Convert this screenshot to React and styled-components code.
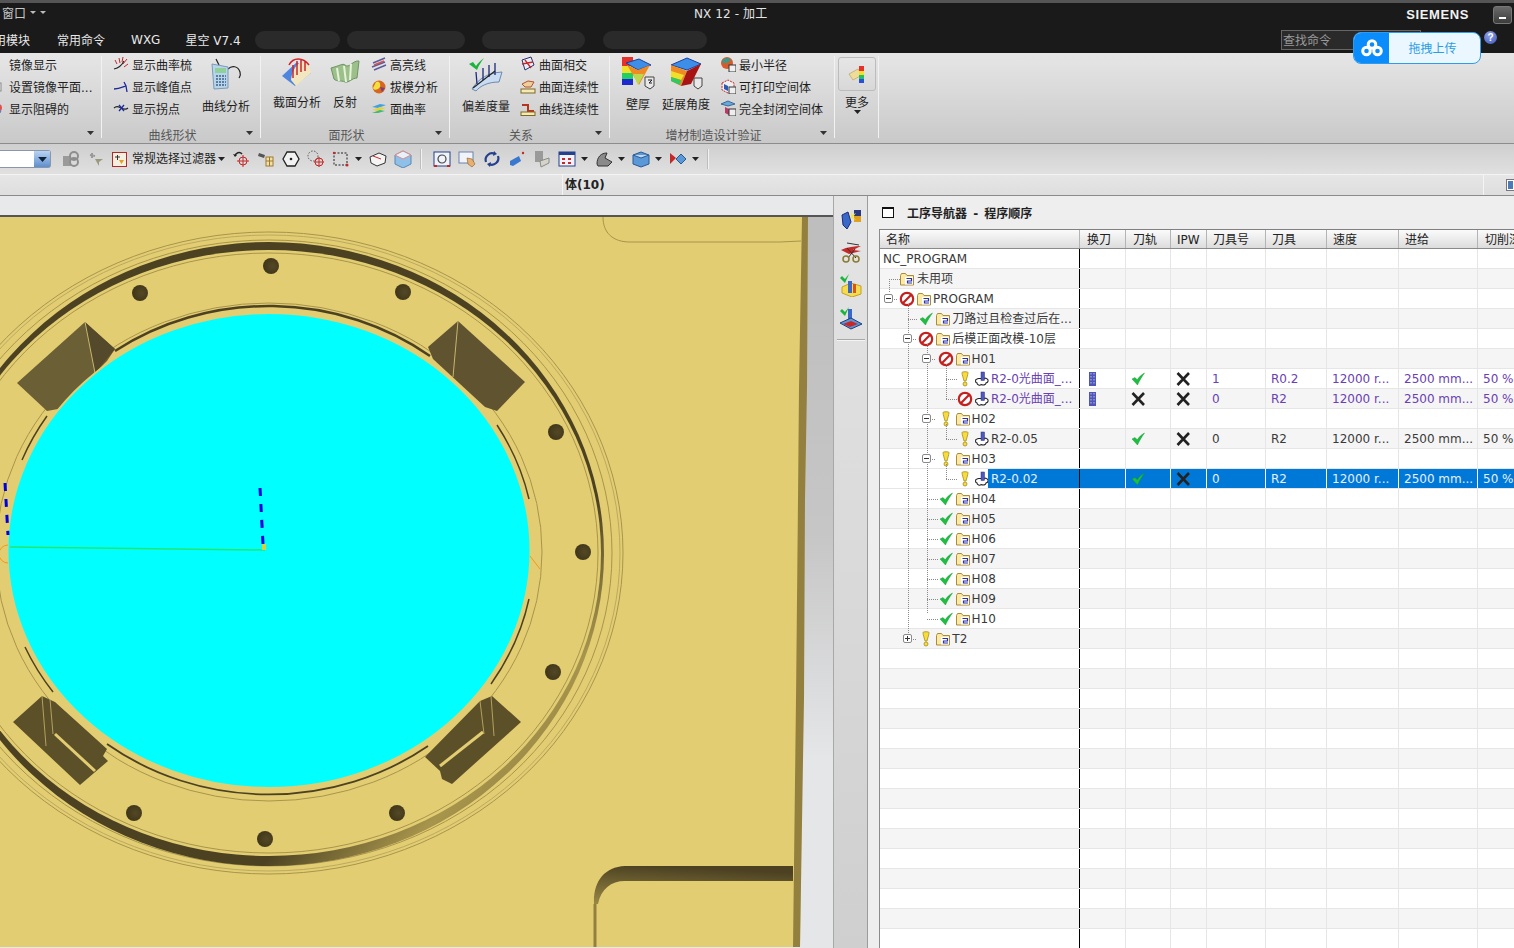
import React from 'react';
import styled, { createGlobalStyle } from 'styled-components';

const GlobalStyle = createGlobalStyle`
	html, body {
		margin: 0;
		padding: 0;
		width: 1514px;
		height: 948px;
		overflow: hidden;
		background: #e4e4e4;
		font-family: "DejaVu Sans", "Noto Sans CJK SC", sans-serif;
		font-size: 12px;
	}
`;

const Page = styled.div`
	position: relative;
	width: 1514px;
	height: 948px;
	overflow: hidden;
	display: flex;
	flex-direction: column;
`;

/* ---------- title + tabs ---------- */
const TitleBar = styled.div`
	height: 23px;
	border-top: 3px solid #555;
	background: #1a1a1a;
	color: #ddd;
	display: flex;
	align-items: center;
	flex: none;
`;

const WindowMenu = styled.div`
	width: 694px;
	padding: 0 0 5px 2px;
	box-sizing: border-box;
	display: flex;
	align-items: center;
	gap: 4px;
	color: #c8c8c8;
	font-family: "Noto Sans CJK SC", sans-serif;
`;

const TinyArrow = styled.span`
	display: inline-block;
	width: 0;
	height: 0;
	border-left: 3px solid transparent;
	border-right: 3px solid transparent;
	border-top: 3px solid ${({ $color }) => $color || '#bbb'};
`;

const AppName = styled.div`
	color: #e4e4e4;
	font-size: 12px;
	letter-spacing: 0.1px;
	padding-bottom: 5px;
`;

const Brand = styled.div`
	margin-left: auto;
	margin-right: 24px;
	font-family: "Liberation Sans", sans-serif;
	font-weight: 700;
	font-size: 13px;
	letter-spacing: 0.6px;
	color: #f2f2f2;
`;

const MinButton = styled.div`
	width: 19px;
	height: 18px;
	margin-right: 2px;
	box-sizing: border-box;
	border: 1px solid #777;
	border-radius: 3px;
	background: linear-gradient(#6a6a6a, #3c3c3c);
	display: flex;
	align-items: flex-end;
	justify-content: center;
	padding-bottom: 4px;
	&::before {
		content: '';
		width: 7px;
		height: 2px;
		background: #fff;
	}
`;

const TabBar = styled.div`
	height: 27px;
	background: #1a1a1a;
	color: #e8e8e8;
	display: flex;
	align-items: center;
	flex: none;
`;

const Tab = styled.div`
	margin-left: ${({ $left }) => $left}px;
	white-space: nowrap;
	font-size: 12px;
`;

const Smudge = styled.div`
	width: ${({ $w }) => $w}px;
	height: 18px;
	margin-left: ${({ $left }) => $left}px;
	border-radius: 10px;
	background: #2a2a2a;
	box-shadow: 0 1px 0 -${({ $w }) => Math.round($w * 0.3)}px #8a8a8a;
`;

const SearchBox = styled.div`
	width: 140px;
	height: 20px;
	margin-left: auto;
	box-sizing: border-box;
	border: 1px solid #666;
	background: #2a2a2a;
	color: #9a9a9a;
	padding: 2px 1px 0;
	line-height: 16px;
`;

const HelpDot = styled.div`
	width: 13px;
	height: 13px;
	margin: -4px 17px 0 63px;
	border-radius: 50%;
	background: radial-gradient(circle at 40% 30%, #8ea2ea, #3f55b8);
	color: #fff;
	font: 700 10px/13px "Liberation Sans", sans-serif;
	text-align: center;
`;

const UploadWidget = styled.div`
	position: absolute;
	left: 1353px;
	top: 32px;
	width: 128px;
	height: 32px;
	box-sizing: border-box;
	border: 1px solid #2f9bee;
	border-radius: 8px;
	overflow: hidden;
	background: #eaf7ff;
	display: flex;
	align-items: center;
`;

const UploadLogo = styled.div`
	width: 35px;
	height: 100%;
	background: #0a8cfb;
	display: flex;
	align-items: center;
	justify-content: center;
	flex: none;
`;

const UploadText = styled.div`
	flex: 1;
	text-align: center;
	color: #2b9ce6;
	font-size: 12px;
	padding: 0 4px 2px 0;
`;

/* ---------- ribbon ---------- */
const Ribbon = styled.div`
	height: 91px;
	flex: none;
	display: flex;
	background: linear-gradient(#e6e6e6, #c9c9c9);
	border-bottom: 1px solid #8c8c8c;
	box-sizing: border-box;
	color: #1e1e1e;
`;

const Group = styled.div`
	width: ${({ $w }) => $w}px;
	flex: none;
	box-sizing: border-box;
	display: flex;
	flex-direction: column;
	position: relative;
	&::after {
		content: '';
		position: absolute;
		right: 0;
		top: 3px;
		bottom: 5px;
		width: 1px;
		background: #f2f2f2;
	}
`;

const GroupBody = styled.div`
	height: 69px;
	flex: none;
	display: flex;
	align-items: flex-start;
	margin-left: ${({ $pad }) => $pad}px;
	gap: ${({ $gap }) => $gap || 0}px;
`;

const GroupCaption = styled.div`
	flex: 1;
	display: flex;
	align-items: center;
	padding-right: 8px;
	color: #555;
	font-size: 12px;
`;

const CaptionText = styled.div`
	flex: 1;
	text-align: center;
	padding-right: 3px;
	margin-top: 4px;
`;

const BigTool = styled.div`
	width: ${({ $w }) => $w}px;
	flex: none;
	margin-left: ${({ $left }) => $left || 0}px;
	display: flex;
	flex-direction: column;
	align-items: center;
	white-space: nowrap;
	svg {
		flex: none;
		margin-top: 3px;
		margin-bottom: 5px;
	}
`;

const SmallList = styled.div`
	display: flex;
	flex-direction: column;
	margin-left: ${({ $left }) => $left || 0}px;
`;

const SmallTool = styled.div`
	height: 22px;
	display: flex;
	align-items: center;
	gap: 3px;
	white-space: nowrap;
	svg {
		flex: none;
	}
`;

const MoreGroup = styled(Group)`
	align-items: center;
	padding-top: 4px;
`;

const MoreButton = styled.div`
	width: 38px;
	height: 34px;
	box-sizing: border-box;
	border: 1px solid #bcbcbc;
	border-radius: 3px;
	background: linear-gradient(#e6e6e6, #d8d8d8);
	display: flex;
	align-items: center;
	justify-content: center;
`;

const MoreLabel = styled.div`
	margin-top: 5px;
	line-height: 14px;
`;

/* ---------- toolbar ---------- */
const ToolBar = styled.div`
	height: 31px;
	flex: none;
	display: flex;
	align-items: center;
	box-sizing: border-box;
	background: linear-gradient(#cfcfcf, #e0e0e0);
	border-bottom: 1px solid #f4f4f4;
	color: #1e1e1e;
`;

const Combo = styled.div`
	width: 51px;
	height: 18px;
	flex: none;
	box-sizing: border-box;
	border: 1px solid #8a97a8;
	border-left: none;
	border-radius: 0 3px 3px 0;
	background: #fff;
	display: flex;
	justify-content: flex-end;
	margin-right: 7px;
`;

const ComboDrop = styled.div`
	width: 16px;
	background: linear-gradient(#b9d3f2, #5f8fce);
	display: flex;
	align-items: center;
	justify-content: center;
`;

const ToolSlot = styled.div`
	width: 25px;
	height: 20px;
	flex: none;
	display: flex;
	align-items: center;
	justify-content: center;
`;

const ToolDrop = styled.div`
	width: 10px;
	margin-right: 2px;
	flex: none;
	display: flex;
	justify-content: center;
`;

const FilterLabel = styled.div`
	margin: -3px 2px 0 5px;
	width: 82px;
	white-space: nowrap;
	flex: none;
`;

const FilterBox = styled.div`
	margin-left: 4px;
	width: 15px;
	height: 15px;
	flex: none;
	box-sizing: border-box;
	border: 1px solid #b02a2a;
	background: #f5efe0;
	display: flex;
	align-items: center;
	justify-content: center;
`;

const ToolSep = styled.div`
	width: 1px;
	height: 20px;
	margin: 0 ${({ $right }) => $right}px 0 6px;
	flex: none;
	background: #f2f2f2;
	box-shadow: -1px 0 0 #bdbdbd;
`;

/* ---------- selection bar ---------- */
const SelectionBar = styled.div`
	height: 21px;
	flex: none;
	box-sizing: border-box;
	display: flex;
	align-items: center;
	background: linear-gradient(#e6e6e6, #dedede);
	border-bottom: 1px solid #8a8a8a;
`;

const SelectionTitle = styled.div`
	margin-left: 562px;
	height: 100%;
	padding-left: 2px;
	border-left: 1px solid #f4f4f4;
	font-weight: 700;
	font-size: 12px;
	line-height: 20px;
	color: #222;
`;

const SelectionEnd = styled.div`
	margin-left: auto;
	width: 31px;
	height: 100%;
	box-sizing: border-box;
	border-left: 1px solid #f4f4f4;
	display: flex;
	align-items: center;
	justify-content: flex-end;
`;

const ViewIcon = styled.div`
	width: 8px;
	height: 12px;
	box-sizing: border-box;
	border: 1px solid #777;
	border-right: none;
	background: #4a7ab8;
	box-shadow: inset 0 0 0 1px #fff;
`;

/* ---------- main area ---------- */
const Main = styled.div`
	flex: 1;
	min-height: 0;
	display: flex;
`;

const Viewport = styled.div`
	width: 834px;
	flex: none;
	display: flex;
	flex-direction: column;
	background: linear-gradient(#bdbdbd, #c6c6c6 45%, #e5e6e8 75%);
	border-right: 1px solid #a8a8a8;
	box-sizing: border-box;
`;

const ViewportStrip = styled.div`
	height: 19px;
	flex: none;
	background: #e8e9eb;
	border-bottom: 2px solid #555;
`;

const SideRail = styled.div`
	width: 34px;
	flex: none;
	box-sizing: border-box;
	background: linear-gradient(#e4e4e4, #cfcfcf);
	border-right: 1px solid #9c9c9c;
	display: flex;
	flex-direction: column;
	align-items: center;
	padding-top: 7px;
	gap: 1px;
`;

const RailButton = styled.div`
	width: 30px;
	height: 32px;
	display: flex;
	align-items: center;
	justify-content: center;
`;

const RailLine = styled.div`
	width: 28px;
	height: 1px;
	margin-top: 4px;
	background: #a8a8a8;
	box-shadow: 0 1px 0 #f4f4f4;
`;

const NavPanel = styled.div`
	flex: 1;
	min-width: 0;
	background: #eeeeee;
	display: flex;
	flex-direction: column;
	padding-left: 11px;
`;

const NavHeader = styled.div`
	height: 33px;
	flex: none;
	display: flex;
	align-items: center;
	gap: 13px;
	padding-left: 3px;
	font-weight: 700;
	font-size: 12px;
	word-spacing: 2px;
	color: #222;
`;

const NavCheck = styled.div`
	width: 12px;
	height: 11px;
	box-sizing: border-box;
	border: 1px solid #111;
	border-top-width: 2px;
	background: #fff;
`;

const Table = styled.div`
	flex: 1;
	overflow: hidden;
	background: #fff;
	border-left: 1px solid #8a8a8a;
	border-top: 1px solid #808080;
	display: flex;
	flex-direction: column;
	color: #3a3a3a;
`;

const columns = '200px 46px 45px 36px 59px 61px 72px 79px 37px';

const HeadRow = styled.div`
	display: grid;
	grid-template-columns: ${columns};
	height: 19px;
	flex: none;
	box-sizing: border-box;
	border-bottom: 1px solid #8a8a8a;
	background: linear-gradient(#fbfbfb, #dcdcdc);
`;

const HeadCell = styled.div`
	padding-left: ${({ $pad }) => $pad || 6}px;
	border-right: 1px solid #b4b4b4;
	white-space: nowrap;
	overflow: hidden;
	line-height: 21px;
	color: #222;
`;

const TableBody = styled.div`
	position: relative;
	flex: 1;
	overflow: hidden;
`;

const TreeGuides = styled.svg`
	position: absolute;
	left: 0;
	top: 0;
	pointer-events: none;
`;

const Row = styled.div`
	display: grid;
	grid-template-columns: ${columns};
	height: 20px;
	box-sizing: border-box;
	border-bottom: 1px solid #e6e6e6;
	background: ${({ $odd, $selected }) => ($selected ? '#fff' : $odd ? '#f5f5f5' : '#fff')};
	color: ${({ $purple, $selected }) => ($selected ? '#e6f0ff' : $purple ? '#6a40b4' : '#3a3a3a')};
`;

const NameCell = styled.div`
	display: flex;
	align-items: center;
	border-right: 1px solid #000;
	white-space: nowrap;
	overflow: hidden;
`;

const ExpandSlot = styled.div`
	width: 20px;
	margin-left: ${({ $level }) => $level * 19.3 - 2}px;
	flex: none;
	display: flex;
	justify-content: center;
`;

const Expander = styled.div`
	position: relative;
	z-index: 2;
	width: 9px;
	height: 9px;
	box-sizing: border-box;
	border: 1px solid #8a8a8a;
	border-radius: 2px;
	background: #fff;
	&::before {
		content: '';
		position: absolute;
		left: 1px;
		top: 3px;
		width: 5px;
		height: 1px;
		background: #333;
	}
	&::after {
		content: '';
		display: ${({ $closed }) => ($closed ? 'block' : 'none')};
		position: absolute;
		left: 3px;
		top: 1px;
		width: 1px;
		height: 5px;
		background: #333;
	}
`;

const StatusSlot = styled.div`
	width: 18px;
	flex: none;
	display: flex;
	justify-content: center;
`;

const KindSlot = styled.div`
	width: 16px;
	flex: none;
	display: flex;
	justify-content: center;
`;

const NameText = styled.div`
	flex: 1;
	align-self: stretch;
	margin-left: ${({ $selected }) => ($selected ? -2 : 1)}px;
	padding-left: ${({ $selected }) => ($selected ? 3 : 0)}px;
	line-height: 20px;
	background: ${({ $selected }) => ($selected ? '#0078d7' : 'transparent')};
`;

const RootText = styled.div`
	padding-left: 3px;
`;

const Cell = styled.div`
	display: flex;
	align-items: center;
	padding-left: ${({ $pad }) => $pad || 5}px;
	border-right: 1px solid ${({ $selected }) => ($selected ? '#fff' : '#e6e6e6')};
	background: ${({ $selected }) => ($selected ? '#0078d7' : 'transparent')};
	white-space: nowrap;
	overflow: hidden;
`;

/* ---------- icons ---------- */
const Svg = ({ s = 16, w, h, vb, children }) => (
	<svg width={w || s} height={h || s} viewBox={vb || `0 0 ${w || s} ${h || s}`}>{children}</svg>
);

const Tri = ({ c = '#222', s = 3 }) => (
	<svg width={s * 2 + 1} height={s + 1} viewBox="0 0 7 4" style={{ display: 'block' }}>
		<path d="M0 0h7L3.5 4z" fill={c} />
	</svg>
);

const FolderIcon = () => (
	<Svg s={16}>
		<path d="M1.5 4.5V14h13V4.5H8L6.5 2.5h-4z" fill="#fbe9a4" stroke="#a98c3a" />
		<rect x="6" y="6" width="8" height="7.5" fill="#fff" />
		<path d="M7.5 7.5h5v2.5h-4v2h4.5" fill="none" stroke="#2a2fa8" strokeWidth="1.2" />
	</Svg>
);

const NoEntryIcon = () => (
	<Svg s={16}>
		<circle cx="8" cy="8" r="6.2" fill="#fff" stroke="#c4201f" strokeWidth="2.2" />
		<path d="M3.8 12.2l8.4-8.4" stroke="#c4201f" strokeWidth="2.2" />
	</Svg>
);

const CheckIcon = ({ s = 14 }) => (
	<svg width={s} height={s} viewBox="0 0 14 14">
		<path d="M1 7l3-1.500 2.300 2.300C8 5 10 3 13.500 1 11 4.500 8.500 8.500 6.500 13z" fill="#1cc040" stroke="#0f8e2a" strokeWidth=".4" />
	</svg>
);

const BulbIcon = () => (
	<Svg s={16}>
		<path d="M5 1.500c0-1 6-1 6 0 0 2.500-1.500 6-2 8.500H7C6.500 7.500 5 4 5 1.500z" fill="#f7dc3c" stroke="#a48c1e" strokeWidth=".8" />
		<ellipse cx="8" cy="13" rx="2" ry="2" fill="#f7dc3c" stroke="#a48c1e" strokeWidth=".8" />
	</Svg>
);

const OpIcon = () => (
	<Svg s={16}>
		<path d="M3 8c-2 .5-2 3.500 0 4 0 2 3 3 4 1.500 2 1 5 .5 5-1.500 2.500-.5 3-3.500.5-4.500-1-.5-2-.5-3 0H4.500z" fill="#fff" stroke="#222" strokeWidth="1.100" />
		<rect x="7" y="1" width="3.500" height="8.500" fill="#4f58b8" stroke="#2e3384" strokeWidth=".5" />
	</Svg>
);

const CrossIcon = () => (
	<svg width="14" height="14" viewBox="0 0 14 14">
		<path d="M1.500 1l11.500 12M13 1L1.500 13" stroke="#222" strokeWidth="2.600" />
	</svg>
);

const ToolChangeIcon = () => (
	<svg width="7" height="14" viewBox="0 0 7 14">
		<rect width="7" height="14" fill="#4f56b6" />
		<path d="M2 1v12M5 1v12" stroke="#b8bcf0" strokeDasharray="1.500 1.500" />
	</svg>
);

const ic = {
	mirror: <Svg s={16}><path d="M8 2v12" stroke="#b52020" strokeWidth="2" /><rect x="2" y="6" width="5" height="7" fill="#f3d6c0" stroke="#b52020" /></Svg>,
	mirrorPlane: <Svg s={16}><rect x="3" y="5" width="8" height="8" fill="#eee" stroke="#888" /><path d="M8 2v4" stroke="#b52020" strokeWidth="2" /></Svg>,
	block: <Svg s={16}><circle cx="8" cy="8" r="4" fill="#e05050" /><path d="M3 9l8 3" stroke="#4a8ad0" strokeWidth="2" /></Svg>,
	comb: <Svg s={16}><path d="M1 13c5-1 8-4 10-8" fill="none" stroke="#222" strokeWidth="1.200" /><path d="M4 8L2 4M7 7L6 2M9 6l1-5M10 8l4-5M11 11l4-3" stroke="#c22a2a" /></Svg>,
	peak: <Svg s={16}><path d="M1 11c5 0 9-2 12-3" fill="none" stroke="#1c2a9c" strokeWidth="1.300" /><path d="M11 4l2 4 1 6" fill="none" stroke="#1c2a9c" strokeWidth="1.300" /></Svg>,
	inflect: <Svg s={16}><path d="M1 8c3-3 5-1 7 0s5 2 7 0" fill="none" stroke="#222" strokeWidth="1.100" /><path d="M6 5l5 6M11 5l-5 6" stroke="#1c2a9c" strokeWidth="1.300" /></Svg>,
	curveAn: (
		<Svg w={36} h={36}>
			<path d="M8 3l3 6M20 13c4-4 10-3 12 3 1 3 0 4-1 6" fill="none" stroke="#222" strokeWidth="1.200" />
			<path d="M4 8l16 3v21L6 33z" fill="#b7d4ea" stroke="#7b9ab8" />
			<rect x="7" y="12" width="11" height="5" fill="#8fd09a" />
			<path d="M8 20h10M8 23h10M8 26h10M8 29h10" stroke="#5b7ea0" strokeWidth="2" strokeDasharray="2 1" />
		</Svg>
	),
	section: (
		<Svg w={32} h={32}>
			<path d="M1 20L16 6l14 11-16 13z" fill="#4f84e0" />
			<path d="M10 24c1-12 9-20 14-18 4 2 5 6 6 11l-15 13z" fill="#f2e6c0" />
			<path d="M12 22V9M16 19V5M20 16V3M24 15V5M8 9c4-8 14-8 20 0" fill="none" stroke="#d0242a" strokeWidth="1.500" />
		</Svg>
	),
	reflect: (
		<Svg w={32} h={32}>
			<path d="M2 12c8-2 12-5 14-3 4 4 8-5 14-4l-2 17c-5 0-8 5-12 4-4-2-8 0-11-3z" fill="#9cc08a" stroke="#6e9462" />
			<path d="M8 12l2 13M15 10l2 16M22 8l-1 16" stroke="#e6f2da" strokeWidth="2" />
		</Svg>
	),
	highlight: <Svg s={16}><path d="M2 7l12-5M1 11l13-5M3 14l12-5" stroke="#5a5a9c" strokeWidth="1.500" /><path d="M3 9l10-4" stroke="#d2524e" strokeWidth="1.500" /></Svg>,
	draft: <Svg s={16}><circle cx="8" cy="9" r="6.500" fill="#d8661e" /><path d="M5 4c3-2 5 2 4 5-2 3-6 4-7 1z" fill="#f2de3c" /><path d="M9 9l5 1-3 4z" fill="#7a3c80" /></Svg>,
	faceCurv: <Svg s={16}><path d="M1 7l8-3 6 1-8 3z" fill="#3ea0e6" /><path d="M1 10l8-3 6 1-8 3z" fill="#e4d23a" /><path d="M1 13l8-3 5 1-7 2z" fill="#40b878" /></Svg>,
	deviation: (
		<Svg w={36} h={36}>
			<path d="M4 33c7-11 16-16 30-17l-3 10C20 26 12 30 8 35z" fill="#c9dcf2" stroke="#6b8ab0" />
			<path d="M9 28L8 16M15 24V12M21 21V9M27 19V7" stroke="#1c2a7c" strokeWidth="1.300" />
			<path d="M5 32L27 15" stroke="#222" strokeWidth="1.200" />
			<path d="M1 8l4-2 3 4c2-3 5-6 8-8-3 4-5 7-7 12z" fill="#19b53c" />
		</Svg>
	),
	intersect: <Svg s={16}><path d="M2 4l9-3 3 8-9 5z" fill="#e8eef8" stroke="#26306c" /><path d="M5 4l6 8M2 8l11-2" stroke="#c62828" strokeWidth="1.300" /></Svg>,
	faceCont: <Svg s={16}><path d="M2 6l6-3 6 1-3 5H5z" fill="#eecf9c" stroke="#b4542a" /><rect x="1" y="11" width="14" height="4" fill="#f6e9b2" stroke="#7a6a2a" /></Svg>,
	curveCont: <Svg s={16}><path d="M2 5h6v6h6" fill="none" stroke="#b8321e" strokeWidth="2" /><rect x="1" y="12" width="14" height="3.500" fill="#f6e9b2" stroke="#7a6a2a" /></Svg>,
	wall: (
		<Svg w={34} h={34}>
			<rect x="1" y="1" width="11" height="28" fill="#1c2ad0" />
			<rect x="1" y="1" width="11" height="9" fill="#e8302a" />
			<rect x="1" y="10" width="11" height="7" fill="#f0e02c" />
			<rect x="1" y="17" width="11" height="6" fill="#20d060" />
			<path d="M5 7l13-4 12 6-13 5z" fill="#3d8ee8" stroke="#1c3f9c" />
			<path d="M6 9l11 5 12-5-11 20z" fill="#f08a22" />
			<path d="M12 18l5 11 6-11z" fill="#bcd850" />
			<path d="M24 21h9v9l-4 3-5-3z" fill="#e8e8e8" stroke="#444" />
			<path d="M27 24h4l-3 3h3" fill="none" stroke="#222" />
		</Svg>
	),
	extend: (
		<Svg w={34} h={34}>
			<path d="M2 9l16-7 14 6-14 6z" fill="#3d8ee8" stroke="#1c3f9c" />
			<path d="M2 9l16 6-6 15-10-5z" fill="#f08a22" />
			<path d="M2 15l13 4-3 5-10-3z" fill="#f0e02c" />
			<path d="M2 21l10 3-1 5-9-4z" fill="#30c860" />
			<path d="M18 15l14-7-10 20-10 2z" fill="#a81414" />
			<path d="M25 22h8v8l-4 3-4-3z" fill="#e8e8e8" stroke="#444" />
		</Svg>
	),
	radius: <Svg s={16}><circle cx="7" cy="7" r="6" fill="#d85a2a" /><path d="M2 7a5 5 0 0 1 9-3L7 7z" fill="#3a9a8a" /><rect x="9" y="9" width="7" height="7" fill="#eee" stroke="#333" /></Svg>,
	printable: <Svg s={16}><path d="M2 5l6-3 6 3v7l-6 3-6-3z" fill="#f0f0f0" stroke="#c62828" strokeDasharray="2 1" /><path d="M4 6l4 2v5l-4-2z" fill="#2a5ab8" /><rect x="9" y="9" width="7" height="7" fill="#eee" stroke="#333" /></Svg>,
	sealed: <Svg s={16}><path d="M1 4l7-3 7 3-7 2z" fill="#68a8d8" stroke="#3a6a9c" /><path d="M5 7l4 2v6l-4-2z" fill="#b83a6a" /><rect x="9" y="9" width="7" height="7" fill="#eee" stroke="#333" /></Svg>,
	more: <Svg w={18} h={20}><path d="M1 10l9-5 4 6-9 5z" fill="#f0dc9a" stroke="#b09a4a" strokeWidth=".6" /><rect x="11" y="2" width="5" height="5" fill="#e8302a" /><rect x="11" y="7" width="5" height="4" fill="#f0e02c" /><rect x="11" y="11" width="5" height="4" fill="#20c060" /><rect x="11" y="15" width="5" height="4" fill="#2a50d8" /></Svg>,
};

const tb = {
	t1: <Svg s={18}><rect x="1" y="6" width="8" height="10" fill="#9a9a9a" /><circle cx="12" cy="6" r="4" fill="none" stroke="#8e8e8e" strokeWidth="2" /><circle cx="12" cy="12" r="4" fill="none" stroke="#8e8e8e" strokeWidth="2" /></Svg>,
	t2: <Svg s={16}><path d="M2 4l5 1M4 2v5" stroke="#9a9a9a" strokeWidth="2" /><path d="M7 8h8l-4 3v4z" fill="#9a9a7a" /></Svg>,
	snap: <Svg s={18}><path d="M3 6a4 4 0 0 1 7-2" fill="none" stroke="#222" strokeWidth="1.500" /><path d="M1 4l2 3 2-2" fill="#222" /><circle cx="11" cy="11" r="4" fill="none" stroke="#c62828" /><path d="M11 5v12M5 11h12" stroke="#c62828" /></Svg>,
	bino: <Svg s={18}><path d="M2 3l6 2-1 3-6-2z" fill="#555" /><rect x="9" y="7" width="7" height="9" fill="#f0e0a8" stroke="#a07a30" /><path d="M9 11h7M12.500 7v9" stroke="#a07a30" /></Svg>,
	hex: <Svg s={18}><path d="M5 2h8l4 7-4 7H5L1 9z" fill="#f2f2f2" stroke="#222" strokeWidth="1.300" /><circle cx="9" cy="9" r="1.300" fill="#222" /></Svg>,
	ring: <Svg s={18}><circle cx="6" cy="6" r="5" fill="none" stroke="#555" strokeDasharray="1.500 1.500" /><circle cx="12" cy="12" r="4" fill="none" stroke="#c62828" /><path d="M12 7v10M7 12h10" stroke="#c62828" /></Svg>,
	rect: <Svg s={18}><rect x="2" y="3" width="13" height="12" fill="none" stroke="#222" strokeDasharray="2 1.500" /><circle cx="15" cy="15" r="1.500" fill="#c62828" /><circle cx="2" cy="3" r="1.200" fill="#c62828" /></Svg>,
	cube1: <Svg s={18}><path d="M1 7l9-4 7 3-1 7-8 3-6-3z" fill="#f4f4f4" stroke="#333" /><path d="M4 6l8 3" stroke="#c62828" /></Svg>,
	cube2: <Svg s={18}><path d="M1 5l8-4 8 4v9l-8 4-8-4z" fill="#8ec0e8" stroke="#5a88b0" /><path d="M1 5l8 4 8-4-8-4z" fill="#e6f2fa" stroke="#e08a8a" /></Svg>,
	fit: <Svg s={18}><rect x="1" y="2" width="16" height="14" fill="#f0f4fa" stroke="#25408c" /><circle cx="9" cy="9" r="4" fill="none" stroke="#444" strokeWidth="1.200" /><path d="M1 16h3M14 16h3" stroke="#c62828" strokeWidth="2" /></Svg>,
	hand: <Svg s={18}><rect x="1" y="2" width="14" height="11" fill="#f0f4fa" stroke="#6a82b0" /><path d="M9 8l5 1 3 5-3 3-4-3z" fill="#e8b070" stroke="#8a5a20" strokeWidth=".6" /></Svg>,
	rotate: <Svg s={18}><path d="M3 12a6.500 6.500 0 0 1 9-8M15 6a6.500 6.500 0 0 1-9 8" fill="none" stroke="#25408c" strokeWidth="2.200" /><path d="M11 1l3 3-4 2zM7 17l-3-3 4-2z" fill="#25408c" /></Svg>,
	pen: <Svg s={18}><path d="M2 11l9-5 2 5-8 5-3-1z" fill="#3a78d0" /><circle cx="15" cy="3" r="1.200" fill="#c62828" /></Svg>,
	layers: <Svg s={18}><rect x="2" y="1" width="8" height="11" fill="#9a9a9a" /><path d="M7 11l9-3v5l-8 4z" fill="#d4d4c8" stroke="#8a8a8a" /></Svg>,
	grid: <Svg s={18}><rect x="1" y="2" width="16" height="14" fill="#f2f2fa" stroke="#25408c" /><rect x="1" y="2" width="16" height="3" fill="#25408c" /><path d="M4 8h3v2H4zM10 8h3v2h-3zM4 12h3v2H4zM10 12h3v2h-3z" fill="#c62828" /></Svg>,
	shade: <Svg s={18}><path d="M2 14c0-7 4-11 10-11l-2 5 7 4-4 4H3z" fill="#8a8a8a" stroke="#333" /></Svg>,
	solid: <Svg s={18}><path d="M1 5l8-3 8 3v9l-8 3-8-3z" fill="#5a98d8" stroke="#2a5a94" /><path d="M1 5l8 3 8-3" fill="#bcd8f2" stroke="#2a5a94" /></Svg>,
	view: <Svg s={18}><path d="M1 3l6 5-6 6z" fill="#c62828" /><path d="M7 9l5-5 5 5-5 5z" fill="#5a98d8" stroke="#2a5a94" /></Svg>,
};

const UploadLogoIcon = () => (
	<svg width="22" height="18" viewBox="0 0 22 18">
		<g fill="none" stroke="#fff" strokeWidth="3">
			<circle cx="11" cy="5.500" r="3.800" />
			<circle cx="5.500" cy="12" r="3.800" />
			<circle cx="16.500" cy="12" r="3.800" />
		</g>
	</svg>
);

/* ---------- viewport drawing, viewBox uses screen coordinates ---------- */
const holes = [[271, 267], [140, 294], [403, 293], [556, 433], [583, 553], [553, 673], [397, 814], [265, 840], [134, 814]];

const PartView = () => (
	<svg width="833" height="730" viewBox="0 218 833 730" style={{ display: 'block' }}>
		<defs>
			<radialGradient id="hole" cx="60%" cy="50%" r="60%">
				<stop offset="0" stopColor="#544825" />
				<stop offset="1" stopColor="#3f3619" />
			</radialGradient>
			<linearGradient id="corner" x1="0" y1="1" x2="0.25" y2="0">
				<stop offset="0" stopColor="#9a8845" />
				<stop offset="1" stopColor="#4c4222" />
			</linearGradient>
			<linearGradient id="band" x1=".3" y1=".2" x2="1" y2=".8">
				<stop offset="0" stopColor="#4c4222" />
				<stop offset=".72" stopColor="#4c4222" />
				<stop offset=".88" stopColor="#a8954c" />
				<stop offset="1" stopColor="#8d7d41" />
			</linearGradient>
		</defs>
		<path d="M0 218H808L805 500 800 948H0z" fill="#e3cd72" />
		<path d="M802 218h6l-1 170-2 112-1 200-4 248h-7l3-248 2-200 1-112z" fill="#93803f" />
		<path d="M603 218c0 16 10 25 27 25h150l21-1" fill="none" stroke="#a8954c" />
		<path d="M625 867h168v15H625c-14 0-24 8-27 23h-4c-1-22 10-37 31-38z" fill="url(#corner)" />
		<path d="M595 905v43" stroke="#93803f" strokeWidth="3" />

		<ellipse cx="269" cy="554" rx="354" ry="321" fill="none" stroke="#a8954c" />
		<ellipse cx="269" cy="554" rx="351" ry="318" fill="none" stroke="#bba961" />
		<ellipse cx="269" cy="554" rx="343" ry="313" fill="none" stroke="#a8954c" />
		<ellipse cx="269" cy="555" rx="335" ry="312" fill="url(#band)" />
		<ellipse cx="269" cy="554" rx="332" ry="303" fill="#e3cd72" />
		<ellipse cx="269" cy="554" rx="329" ry="300" fill="none" stroke="#a8954c" />
		<ellipse cx="269" cy="553" rx="273" ry="249" fill="none" stroke="#a8954c" />
		<g fill="none" stroke="#4c4222">
			<path d="M115 352A266 244 0 0 1 430 357" strokeWidth="2.500" />
			<path d="M107 745A266 244 0 0 0 428 747" strokeWidth="1.800" />
			<path d="M497 426A266 244 0 0 1 529 500" strokeWidth="1.500" />
			<path d="M529 600A266 244 0 0 1 491 685" strokeWidth="1.500" />
			<path d="M25 648A266 244 0 0 0 53 693" strokeWidth="1.500" />
			<path d="M47 417A266 244 0 0 0 22 461" strokeWidth="1.500" />
		</g>

		{holes.map(([x, y]) => <circle key={x} cx={x} cy={y} r="8" fill="url(#hole)" />)}

		<path d="M17 384l68-61 30 27-8 12-12 12-37 36-11 2z" fill="#6b5f35" />
		<path d="M85 323l30 27-20 24z" fill="#54492a" />
		<path d="M85 323l10 51" stroke="#c9b56c" />
		<path d="M428 348l30-26 67 61-28 29-12-4-52-48z" fill="#5f5330" />
		<path d="M458 322l-5 56" stroke="#c9b56c" />
		<path d="M13 723l29-26 13 6 52 47-4 7 5 5-28 24z" fill="#5c5029" />
		<path d="M55 735l40 37" stroke="#e3cd72" strokeWidth="3" />
		<path d="M42 697l4 50M50 700l3 35" stroke="#c9b56c" strokeWidth=".8" />
		<path d="M425 758l55-56 12-5 29 26-69 62-10-5-2-8z" fill="#5c5029" />
		<path d="M440 767l43-34" stroke="#e3cd72" strokeWidth="3" />
		<path d="M480 702l4 33M491 697l3 40" stroke="#c9b56c" strokeWidth=".8" />

		<ellipse cx="269" cy="551.500" rx="261.500" ry="237.500" fill="#00ffff" stroke="#e3cd72" strokeWidth="2" />

		<path d="M260 489l3 56" stroke="#0000e0" strokeWidth="3" strokeDasharray="8 8" />
		<path d="M5 484l3 52" stroke="#0000e0" strokeWidth="3" strokeDasharray="8 8" />
		<path d="M10 548l255 3" stroke="#1fe870" strokeWidth="1.500" />
		<rect x="262" y="545" width="4" height="6" fill="#d8d040" />
		<path d="M8 546a9 9 0 0 0 0 18" fill="none" stroke="#f09a1a" />
		<path d="M530 557l10 13" stroke="#f09a1a" />
	</svg>
);

/* ---------- data ---------- */
const ops = {
	a: { change: true, path: 'ok', ipw: true, no: '1', tool: 'R0.2', speed: '12000 r...', feed: '2500 mm...', depth: '50 %' },
	b: { change: true, path: 'x', ipw: true, no: '0', tool: 'R2', speed: '12000 r...', feed: '2500 mm...', depth: '50 %' },
	c: { path: 'ok', ipw: true, no: '0', tool: 'R2', speed: '12000 r...', feed: '2500 mm...', depth: '50 %' },
};

const rows = [
	{ root: 'NC_PROGRAM' },
	{ level: 0, kind: 'plain', name: '未用项' },
	{ level: 0, exp: 'open', status: 'no', name: 'PROGRAM' },
	{ level: 1, status: 'ok', name: '刀路过且检查过后在...' },
	{ level: 1, exp: 'open', status: 'no', name: '后模正面改模-10层' },
	{ level: 2, exp: 'open', status: 'no', name: 'H01' },
	{ level: 3, status: 'warn', op: true, purple: true, name: 'R2-0光曲面_...', data: ops.a },
	{ level: 3, status: 'no', op: true, purple: true, name: 'R2-0光曲面_...', data: ops.b },
	{ level: 2, exp: 'open', status: 'warn', name: 'H02' },
	{ level: 3, status: 'warn', op: true, name: 'R2-0.05', data: ops.c },
	{ level: 2, exp: 'open', status: 'warn', name: 'H03' },
	{ level: 3, status: 'warn', op: true, selected: true, name: 'R2-0.02', data: ops.c },
	...['H04', 'H05', 'H06', 'H07', 'H08', 'H09', 'H10'].map((name) => ({ level: 2, status: 'ok', name })),
	{ level: 1, exp: 'closed', status: 'warn', name: 'T2' },
];
while (rows.length < 35) rows.push({});

const statusIcons = { no: <NoEntryIcon />, ok: <CheckIcon />, warn: <BulbIcon /> };

const heads = [['名称', 6], ['换刀', 7], ['刀轨', 7], ['IPW', 6], ['刀具号', 6], ['刀具', 6], ['速度', 6], ['进给', 6], ['切削深', 7]];

// tree guide coordinates are relative to the top left of the table body
const guideY = (i) => 10 + i * 20;
const guidePaths = [
	'M9 30V43M9 30H20',
	'M28 55V384M28 70H38',
	'M47 95V364',
	'M66 115V150M66 130H77M66 150H77',
	'M66 175V190M66 190H77',
	'M66 215V230M66 230H77',
	'M14 50H18M33 90H37M52 110H56M52 170H56M52 210H56M33 390H37',
	...[12, 13, 14, 15, 16, 17, 18].map((i) => `M47 ${guideY(i)}H58`),
];

const TableRow = ({ row, odd }) => {
	const { data, selected } = row;
	const cell = { $selected: selected };
	return (
		<Row $odd={odd} $selected={selected} $purple={row.purple}>
			<NameCell>
				{row.root && <RootText>{row.root}</RootText>}
				{row.name && (
					<>
						<ExpandSlot $level={row.level}>{row.exp && <Expander $closed={row.exp === 'closed'} />}</ExpandSlot>
						<StatusSlot>{row.kind === 'plain' ? <FolderIcon /> : statusIcons[row.status]}</StatusSlot>
						{row.kind !== 'plain' && <KindSlot>{row.op ? <OpIcon /> : <FolderIcon />}</KindSlot>}
						<NameText $selected={selected}>{row.name}</NameText>
					</>
				)}
			</NameCell>
			<Cell $pad={9} {...cell}>{data?.change && <ToolChangeIcon />}</Cell>
			<Cell $pad={5} {...cell}>{data && (data.path === 'ok' ? <CheckIcon /> : <CrossIcon />)}</Cell>
			<Cell $pad={5} {...cell}>{data && <CrossIcon />}</Cell>
			<Cell {...cell}>{data?.no}</Cell>
			<Cell {...cell}>{data?.tool}</Cell>
			<Cell {...cell}>{data?.speed}</Cell>
			<Cell {...cell}>{data?.feed}</Cell>
			<Cell {...cell}>{data?.depth}</Cell>
		</Row>
	);
};

const Caption = ({ children }) => (
	<GroupCaption>
		<CaptionText>{children}</CaptionText>
		<Tri c="#333" />
	</GroupCaption>
);

const Small = ({ icon, children }) => <SmallTool>{icon}{children}</SmallTool>;

const Big = ({ w, left, icon, children }) => (
	<BigTool $w={w} $left={left}>{icon}{children}</BigTool>
);

const App = () => (
	<Page>
		<GlobalStyle />
		<TitleBar>
			<WindowMenu>窗口 <TinyArrow /> <TinyArrow /></WindowMenu>
			<AppName>NX 12 - 加工</AppName>
			<Brand>SIEMENS</Brand>
			<MinButton />
		</TitleBar>
		<TabBar>
			<Tab $left={-6}>用模块</Tab>
			<Tab $left={27}>常用命令</Tab>
			<Tab $left={26}>WXG</Tab>
			<Tab $left={25}>星空 V7.4</Tab>
			<Smudge $w={85} $left={14} />
			<Smudge $w={118} $left={7} />
			<Smudge $w={103} $left={17} />
			<Smudge $w={104} $left={18} />
			<SearchBox>查找命令</SearchBox>
			<HelpDot>?</HelpDot>
		</TabBar>
		<UploadWidget>
			<UploadLogo><UploadLogoIcon /></UploadLogo>
			<UploadText>拖拽上传</UploadText>
		</UploadWidget>

		<Ribbon>
			<Group $w={102}>
				<GroupBody $pad={-10}>
					<SmallList>
						<Small icon={ic.mirror}>镜像显示</Small>
						<Small icon={ic.mirrorPlane}>设置镜像平面...</Small>
						<Small icon={ic.block}>显示阻碍的</Small>
					</SmallList>
				</GroupBody>
				<Caption />
			</Group>
			<Group $w={159}>
				<GroupBody $pad={11}>
					<SmallList>
						<Small icon={ic.comb}>显示曲率梳</Small>
						<Small icon={ic.peak}>显示峰值点</Small>
						<Small icon={ic.inflect}>显示拐点</Small>
					</SmallList>
					<Big w={48} left={10} icon={ic.curveAn}>曲线分析</Big>
				</GroupBody>
				<Caption>曲线形状</Caption>
			</Group>
			<Group $w={189}>
				<GroupBody $pad={12}>
					<Big w={48} icon={ic.section}>截面分析</Big>
					<Big w={24} left={12} icon={ic.reflect}>反射</Big>
					<SmallList $left={14}>
						<Small icon={ic.highlight}>高亮线</Small>
						<Small icon={ic.draft}>拔模分析</Small>
						<Small icon={ic.faceCurv}>面曲率</Small>
					</SmallList>
				</GroupBody>
				<Caption>面形状</Caption>
			</Group>
			<Group $w={160}>
				<GroupBody $pad={12}>
					<Big w={48} icon={ic.deviation}>偏差度量</Big>
					<SmallList $left={10}>
						<Small icon={ic.intersect}>曲面相交</Small>
						<Small icon={ic.faceCont}>曲面连续性</Small>
						<Small icon={ic.curveCont}>曲线连续性</Small>
					</SmallList>
				</GroupBody>
				<Caption>关系</Caption>
			</Group>
			<Group $w={225}>
				<GroupBody $pad={16}>
					<Big w={24} icon={ic.wall}>壁厚</Big>
					<Big w={48} left={12} icon={ic.extend}>延展角度</Big>
					<SmallList $left={10}>
						<Small icon={ic.radius}>最小半径</Small>
						<Small icon={ic.printable}>可打印空间体</Small>
						<Small icon={ic.sealed}>完全封闭空间体</Small>
					</SmallList>
				</GroupBody>
				<Caption>增材制造设计验证</Caption>
			</Group>
			<MoreGroup $w={44}>
				<MoreButton>{ic.more}</MoreButton>
				<MoreLabel>更多</MoreLabel>
				<Tri c="#222" />
			</MoreGroup>
		</Ribbon>

		<ToolBar>
			<Combo><ComboDrop><Tri c="#123" s={4} /></ComboDrop></Combo>
			<ToolSlot>{tb.t1}</ToolSlot>
			<ToolSlot>{tb.t2}</ToolSlot>
			<FilterBox><Svg s={11}><path d="M1 3h5M3.500 1v5" stroke="#333" /><path d="M5 6h5L7.500 10z" fill="#e0a020" /></Svg></FilterBox>
			<FilterLabel>常规选择过滤器</FilterLabel>
			<ToolDrop><Tri /></ToolDrop>
			<ToolSlot>{tb.snap}</ToolSlot>
			<ToolSlot>{tb.bino}</ToolSlot>
			<ToolSlot>{tb.hex}</ToolSlot>
			<ToolSlot>{tb.ring}</ToolSlot>
			<ToolSlot>{tb.rect}</ToolSlot>
			<ToolDrop><Tri /></ToolDrop>
			<ToolSlot>{tb.cube1}</ToolSlot>
			<ToolSlot>{tb.cube2}</ToolSlot>
			<ToolSep $right={7} />
			<ToolSlot>{tb.fit}</ToolSlot>
			<ToolSlot>{tb.hand}</ToolSlot>
			<ToolSlot>{tb.rotate}</ToolSlot>
			<ToolSlot>{tb.pen}</ToolSlot>
			<ToolSlot>{tb.layers}</ToolSlot>
			<ToolSlot>{tb.grid}</ToolSlot>
			<ToolDrop><Tri /></ToolDrop>
			<ToolSlot>{tb.shade}</ToolSlot>
			<ToolDrop><Tri /></ToolDrop>
			<ToolSlot>{tb.solid}</ToolSlot>
			<ToolDrop><Tri /></ToolDrop>
			<ToolSlot>{tb.view}</ToolSlot>
			<ToolDrop><Tri /></ToolDrop>
			<ToolSep $right={0} />
		</ToolBar>

		<SelectionBar>
			<SelectionTitle>体(10)</SelectionTitle>
			<SelectionEnd><ViewIcon /></SelectionEnd>
		</SelectionBar>

		<Main>
			<Viewport>
				<ViewportStrip />
				<PartView />
			</Viewport>
			<SideRail>
				<RailButton>
					<Svg s={24}><path d="M3 8l6-3 3 10-4 7-4-4z" fill="#3a68c8" stroke="#1c2a7c" /><rect x="15" y="3" width="7" height="12" fill="#2a3a7c" /><rect x="15" y="9" width="7" height="6" fill="#e0a020" /><path d="M12 3l1 5 4-2-3 4 3 3-5-2z" fill="#f4e640" /></Svg>
				</RailButton>
				<RailButton>
					<Svg s={24}><path d="M2 10c6-3 14-4 20-4l-8 4 8 1-12 3z" fill="#c62828" /><path d="M8 3l12 2M9 18l7-9M8 8l9 10" stroke="#333" /><circle cx="7" cy="19" r="3" fill="none" stroke="#8a7a30" strokeWidth="1.500" /><circle cx="17" cy="19" r="3" fill="none" stroke="#8a7a30" strokeWidth="1.500" /></Svg>
				</RailButton>
				<RailButton>
					<Svg s={24}><path d="M1 5l2-2 3 3 4-5-4 9z" fill="#19b53c" /><path d="M3 14l9-4 10 3v8l-9 3-10-4z" fill="#f4dc50" stroke="#c8a020" /><rect x="9" y="8" width="4" height="12" fill="#3a68c8" /><rect x="14" y="11" width="3" height="9" fill="#d8541e" /></Svg>
				</RailButton>
				<RailButton>
					<Svg s={24}><path d="M1 5l2-2 3 3 4-5-4 9z" fill="#19b53c" /><rect x="9" y="3" width="4" height="13" fill="#3a68c8" /><path d="M1 17l11-5 11 6-11 5z" fill="#5a98d8" stroke="#1c3f7c" /><path d="M4 18l8-3 7 3-8 3z" fill="#c62828" /></Svg>
				</RailButton>
				<RailLine />
			</SideRail>
			<NavPanel>
				<NavHeader>
					<NavCheck />
					工序导航器 - 程序顺序
				</NavHeader>
				<Table>
					<HeadRow>
						{heads.map(([label, pad]) => <HeadCell key={label} $pad={pad}>{label}</HeadCell>)}
					</HeadRow>
					<TableBody>
						{rows.map((row, i) => <TableRow key={i} row={row} odd={i % 2 === 1} />)}
						<TreeGuides width="199" height="420">
							{guidePaths.map((d) => (
								<path key={d} d={d} fill="none" stroke="#8a8a8a" strokeDasharray="1 1" shapeRendering="crispEdges" />
							))}
						</TreeGuides>
					</TableBody>
				</Table>
			</NavPanel>
		</Main>
	</Page>
);

export default App;
